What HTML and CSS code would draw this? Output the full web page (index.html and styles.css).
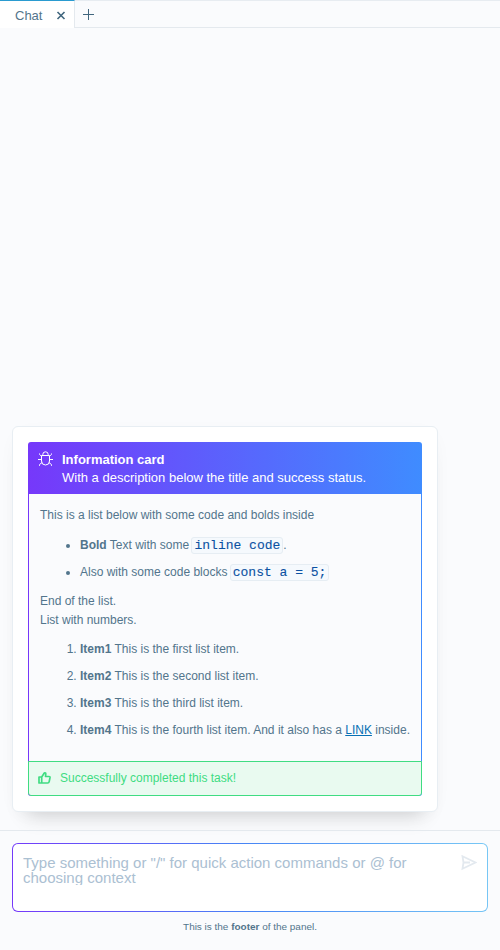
FILE: index.html
```html
<!DOCTYPE html>
<html lang="en">
<head>
<meta charset="utf-8">
<title>Chat</title>
<link rel="stylesheet" href="styles.css">
</head>
<body>
<nav class="tabs">
  <div class="tab"><span>Chat</span>
    <svg class="close" viewBox="0 0 10 10"><path d="M1.500 1l7 7M8.500 1l-7 7"/></svg>
  </div>
  <div class="tab-add"><svg class="plus" viewBox="0 0 11 11"><path d="M5.5 0v11M0 5.5h11"/></svg></div>
</nav>
<main class="chat">
  <article class="card">
    <div class="info">
      <header class="info-head">
        <svg class="bug" viewBox="0 0 16 16"><path d="M3.500 4.500h8v5.500a4 4 0 0 1-8 0zM4.800 4.300V3.500a2.700 2.700 0 0 1 5.400 0v.8M0 8.500h3.500M11.500 8.500H15M1.500 2.500v.8L3.500 5.300M13.500 2.500v.8L11.500 5.300M1.500 14.800v-1.200L4 11.500M13.500 14.800v-1.200L11 11.500"/></svg>
        <div>
          <div class="title">Information card</div>
          <div>With a description below the title and success status.</div>
        </div>
      </header>
      <div class="info-body">
        <p>This is a list below with some code and bolds inside</p>
        <ul>
          <li><strong>Bold</strong> Text with some <code>inline code</code>.</li>
          <li>Also with some code blocks <code>const a = 5;</code></li>
        </ul>
        <p>End of the list.<br>List with numbers.</p>
        <ol>
          <li><strong>Item1</strong> This is the first list item.</li>
          <li><strong>Item2</strong> This is the second list item.</li>
          <li><strong>Item3</strong> This is the third list item.</li>
          <li><strong>Item4</strong> This is the fourth list item. And it also has a <a href="#">LINK</a> inside.</li>
        </ol>
      </div>
      <footer class="status">
        <svg class="thumb" viewBox="0 0 13 12"><path d="M1 5h2.700L6 1.500C6.300.6 7.900.7 7.800 2L7.500 4.500H11c.8 0 1.100.5 1 1.200l-.8 4c-.2.900-.6 1.300-1.500 1.300H1zM3.700 5v6"/></svg>
        <span>Successfully completed this task!</span>
      </footer>
    </div>
  </article>
</main>
<section class="prompt">
  <div class="input">
    <div class="placeholder">Type something or "/" for quick action commands or @ for choosing context</div>
    <svg class="send" viewBox="0 0 16 16"><path d="M1.500 1.200L14.500 7.500 1.500 13.800l1-6.300zM2.500 7.500H9"/></svg>
  </div>
  <div class="note">This is the <strong>footer</strong> of the panel.</div>
</section>
</body>
</html>
```
FILE: styles.css
```css
* { box-sizing: border-box; }
body {
  margin: 0;
  height: 950px;
  display: flex;
  flex-direction: column;
  overflow: hidden;
  background: #fafbfd;
  color: #52758c;
  font: 12px/19px "Liberation Sans", Arial, sans-serif;
}
svg { display: block; flex: none; fill: none; stroke: currentColor; }
.tabs { display: flex; height: 28px; flex: none; border-top: 1px solid #e7ecf1; }
.tab {
  width: 75px;
  height: 28px;
  margin-top: -1px;
  padding: 2px 8px 0 15px;
  display: flex;
  align-items: center;
  justify-content: space-between;
  background: #fff;
  border-top: 1px solid #2a9bd0;
  border-right: 1px solid #e4e9ee;
  font-size: 13px;
}
.close { width: 10px; height: 10px; stroke-width: 1.6; color: #41667e; }
.tab-add { flex: 1; padding: 8px 0 0 8px; border-bottom: 1px solid #e4e9ee; }
.plus { width: 11px; height: 11px; color: #41667e; }
.chat { flex: 1; display: flex; align-items: flex-end; padding: 0 12px 18px; }
.card {
  width: 426px;
  padding: 15px;
  background: #fff;
  border: 1px solid #e8eef3;
  border-radius: 6px;
  box-shadow: 0 18px 20px -15px rgba(0, 0, 0, .16), 0 5px 20px -8px rgba(0, 0, 0, .07);
}
.info { border-radius: 3px; overflow: hidden; background: linear-gradient(90deg, #7638fa, #3f8cff); }
.info-head {
  display: flex;
  height: 52px;
  padding: 9px 10px 0;
  gap: 8px;
  color: #fff;
  font-size: 13px;
  line-height: 18px;
}
.title { font-weight: bold; }
.bug { width: 16px; height: 16px; }
.info-body { height: 267px; margin: 0 1px; padding: 12px 11px 0; background: #fafbfd; }
.info-body p { margin: 0; }
ul { margin: 11px 0 10px; padding-left: 40px; }
ol { margin: 10px 0 0; padding-left: 40px; }
li { height: 19px; margin-bottom: 8px; white-space: nowrap; }
li:last-child { margin-bottom: 0; }
code {
  margin-left: -1px;
  padding: 0 2px;
  border: 1px solid #e6edf3;
  border-radius: 3px;
  background: #f5f9fd;
  color: #0b51a2;
  font: 13px/15px "Courier New", "Liberation Mono", monospace;
  -webkit-text-stroke: .1px #0b51a2;
}
a { color: #0870b4; }
.status {
  display: flex;
  align-items: center;
  height: 35px;
  padding: 0 9px;
  gap: 9px;
  border: 1px solid #40dc82;
  border-radius: 0 0 3px 3px;
  background: #e9faf0;
  color: #40dc82;
}
.thumb { width: 13px; height: 12px; margin-bottom: 1px; stroke-width: 1.7; stroke-linejoin: round; }
.prompt { height: 120px; flex: none; padding: 12px 12px 0; border-top: 1px solid #e4e9ee; }
.input {
  display: flex;
  justify-content: space-between;
  height: 69px;
  padding: 11px 10px 0;
  border: 1px solid transparent;
  border-radius: 6px;
  background: linear-gradient(#fff, #fff) padding-box, linear-gradient(80deg, #7638fa, #4785f5 50%, #78c8f5) border-box;
}
.placeholder { width: 405px; height: 30px; overflow: hidden; color: #abc0d2; font-size: 15px; line-height: 15px; }
.send { width: 16px; height: 16px; color: #e3e9ef; stroke-width: 1.8; }
.note { padding-top: 6px; text-align: center; font-size: 9.96px; line-height: 18px; }
```
